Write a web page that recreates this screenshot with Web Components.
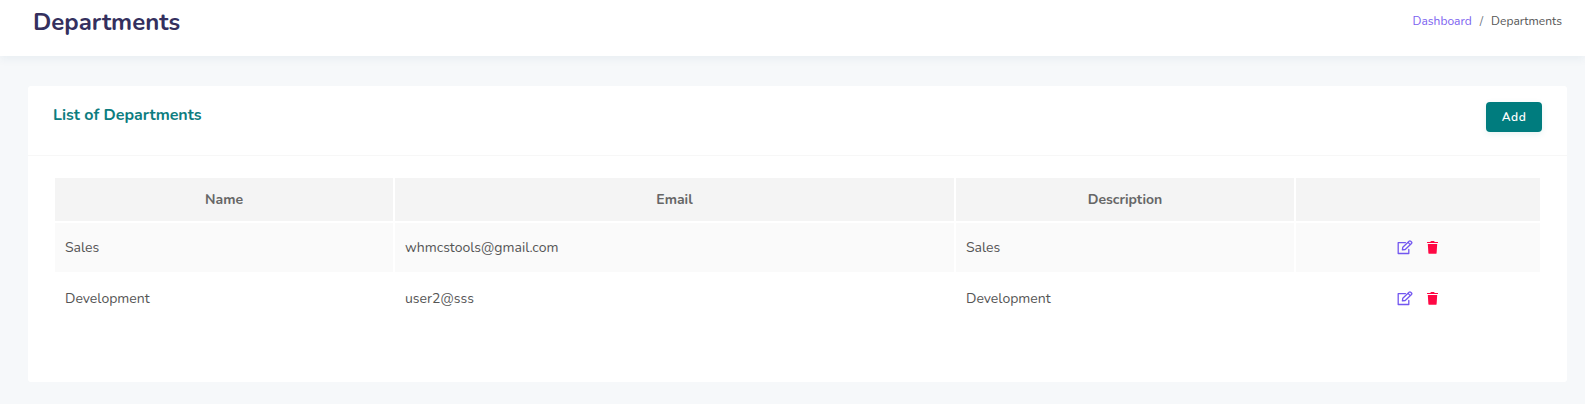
<!DOCTYPE html>
<html lang="en">
<head>
<meta charset="utf-8">
<title>Departments</title>
<style>
html,body{margin:0;height:404px;overflow:hidden;background:#f6f8fa;font-family:Nunito,Lato,"Open Sans",sans-serif;color:#555;font-size:14px}
</style>
</head>
<body>
<departments-page></departments-page>
<script>
const define=(name,html)=>customElements.define(name,class extends HTMLElement{
  connectedCallback(){
    if(this.shadowRoot)return;
    this.attachShadow({mode:'open'}).innerHTML=html;
  }
});

define('page-header',`<style>
:host{display:flex;justify-content:space-between;box-sizing:border-box;height:56px;padding:0 23px 0 33px;background:#fff;box-shadow:0 4px 8px rgba(0,70,110,.05);position:relative}
h1{margin:0;font-size:24px;line-height:30px;padding-top:7px;font-weight:700;color:#34305e}
nav{display:flex;font-size:12px;line-height:18px;padding-top:12px}
a{color:#7b61f0;text-decoration:none}
.sep{padding:0 8px;color:#6c757d}
</style>
<h1>Departments</h1>
<nav><a>Dashboard</a><span class="sep">/</span><span>Departments</span></nav>`);

define('teal-button',`<style>
:host{display:block}
button{display:block;width:56px;height:30px;padding:0;border:0;border-radius:4px;background:#007c7e;color:#fff;font:600 12px/30px Nunito,Lato,sans-serif;letter-spacing:.5px;box-shadow:0 2px 6px rgba(0,124,126,.1)}
</style><button><slot></slot></button>`);

define('edit-icon',`<style>:host{display:block;width:16px;height:15px}svg{display:block}</style>
<svg width="16" height="15" viewBox="0 0 16 15" fill="none" stroke="#7256f0" stroke-width="1.3" stroke-linejoin="round" stroke-linecap="round"><path d="M8.4 2.6H1.2V13.5H11.8V9.4"/><path d="M5.4 9.9 5.8 7.2 12.1 1.2Q12.9.5 13.7 1.2L14.5 2Q15.2 2.7 14.5 3.5L8.2 9.5ZM11 2.4 13.3 4.6"/></svg>`);

define('trash-icon',`<style>:host{display:block;width:11px;height:13px}svg{display:block}</style>
<svg width="11" height="13" viewBox="0 0 11 13" fill="#ff0844"><path d="M0 1.2Q0 .9.4.9H3.2L3.8.2Q4 0 4.3 0H6.7Q7 0 7.2.2L7.8.9H10.6Q11 .9 11 1.2V2H0Z"/><path d="M.8 3H10.2L9.6 11.9Q9.5 12.8 8.6 12.8H2.4Q1.5 12.8 1.4 11.9Z"/></svg>`);

define('row-actions',`<style>:host{display:flex;align-items:center;justify-content:center;gap:14px;height:100%;box-sizing:border-box;padding-right:2px}</style><edit-icon></edit-icon><trash-icon></trash-icon>`);

define('departments-table',`<style>
:host{display:grid;grid-template-columns:338px 559px 338px 244px;grid-template-rows:43px 49px 49px;gap:2px}
.h{background:#f4f4f4;font-weight:700;color:#666;text-align:center;line-height:44px}
.c{padding-left:10px;line-height:50px;color:#555}
.odd{background:#fafafa}
</style>
<div class="h">Name</div><div class="h">Email</div><div class="h">Description</div><div class="h"></div>
<div class="c odd">Sales</div><div class="c odd">whmcstools@gmail.com</div><div class="c odd">Sales</div><div class="odd"><row-actions></row-actions></div>
<div class="c">Development</div><div class="c">user2@sss</div><div class="c">Development</div><div><row-actions></row-actions></div>`);

define('panel-card',`<style>
:host{display:block;box-sizing:border-box;width:1539px;height:296px;margin:30px 0 0 28px;background:#fff;border-radius:3px}
header{display:flex;justify-content:space-between;box-sizing:border-box;height:70px;padding:16px 25px 0;border-bottom:1px solid #f7f7f7}
.body{padding:22px 27px}
</style><header><slot name="title"></slot><slot name="action"></slot></header><div class="body"><slot></slot></div>`);

define('departments-page',`<style>
:host{display:block;height:404px;overflow:hidden}
h2{margin:0;font-size:16px;font-weight:700;line-height:26px;color:#0d7d80}
</style>
<page-header></page-header>
<main><panel-card>
<h2 slot="title">List of Departments</h2>
<teal-button slot="action">Add</teal-button>
<departments-table></departments-table>
</panel-card></main>`);
</script>
</body>
</html>
